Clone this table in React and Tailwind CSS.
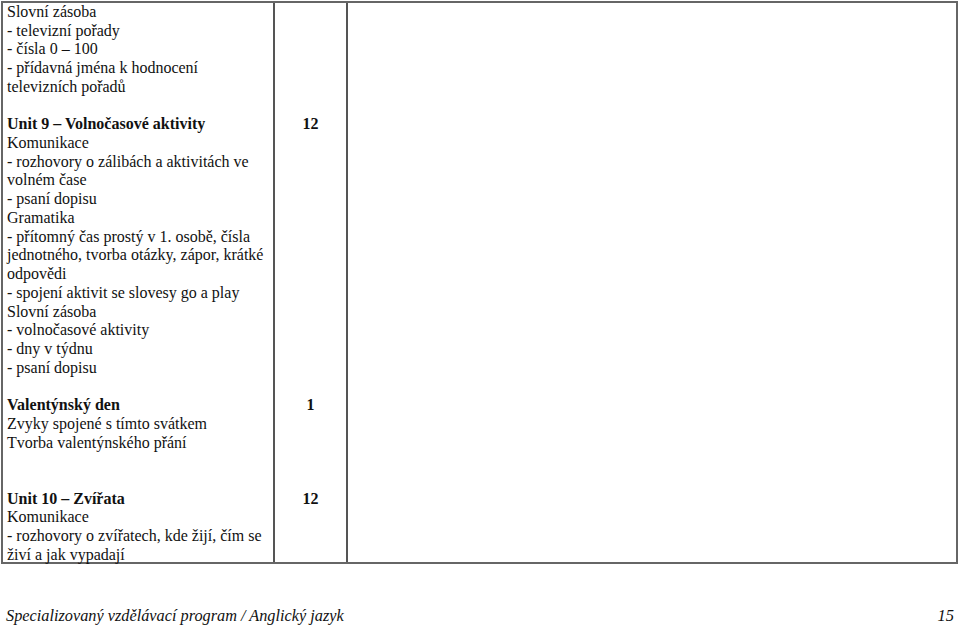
const LH = 18.72

const sections = [
  {
    num: '',
    lines: [
      'Slovní zásoba',
      '- televizní pořady',
      '- čísla 0 – 100',
      '- přídavná jména k hodnocení',
      'televizních pořadů',
    ],
  },
  { gap: 1 },
  {
    num: '12',
    title: 'Unit 9 – Volnočasové aktivity',
    lines: [
      'Komunikace',
      '- rozhovory o zálibách a aktivitách ve',
      'volném čase',
      '- psaní dopisu',
      'Gramatika',
      '- přítomný čas prostý v 1. osobě, čísla',
      'jednotného, tvorba otázky, zápor, krátké',
      'odpovědi',
      '- spojení aktivit se slovesy go a play',
      'Slovní zásoba',
      '- volnočasové aktivity',
      '- dny v týdnu',
      '- psaní dopisu',
    ],
  },
  { gap: 1 },
  {
    num: '1',
    title: 'Valentýnský den',
    lines: ['Zvyky spojené s tímto svátkem', 'Tvorba valentýnského přání'],
  },
  { gap: 2 },
  {
    num: '12',
    title: 'Unit 10 – Zvířata',
    lines: [
      'Komunikace',
      '- rozhovory o zvířatech, kde žijí, čím se',
      'živí a jak vypadají',
    ],
  },
]

export default function App() {
  return (
    <div
      className="w-[960px] h-[627px] bg-white text-[#111] text-[16px] leading-[18.72px] overflow-hidden"
      style={{ fontFamily: '"Liberation Serif", "Times New Roman", serif' }}
    >
      {/* Table */}
      <div className="ml-[1px] mt-[1px] w-[957px] h-[563px] flex border-2 border-[#666]">
        <div className="w-[272px] pl-[4px] border-r-2 border-[#555]">
          {sections.map((s, i) =>
            s.gap ? (
              <div key={i} style={{ height: s.gap * LH }} />
            ) : (
              <div key={i}>
                {s.title && <div className="font-bold whitespace-nowrap">{s.title}</div>}
                {s.lines.map((l) => (
                  <div key={l} className="whitespace-nowrap">{l}</div>
                ))}
              </div>
            )
          )}
        </div>
        <div className="w-[73px] border-r-2 border-[#555]">
          {sections.map((s, i) =>
            s.gap ? (
              <div key={i} style={{ height: s.gap * LH }} />
            ) : (
              <div key={i} style={{ height: (s.lines.length + (s.title ? 1 : 0)) * LH }}>
                <div className="text-center font-bold">{s.num}</div>
              </div>
            )
          )}
        </div>
        <div className="flex-1" />
      </div>

      {/* Footer */}
      <div className="mt-[43px] pl-[6px] pr-[6px] flex justify-between italic text-[16.3px]">
        <span>Specializovaný vzdělávací program / Anglický jazyk</span>
        <span className="text-[16.5px]">15</span>
      </div>
    </div>
  )
}
